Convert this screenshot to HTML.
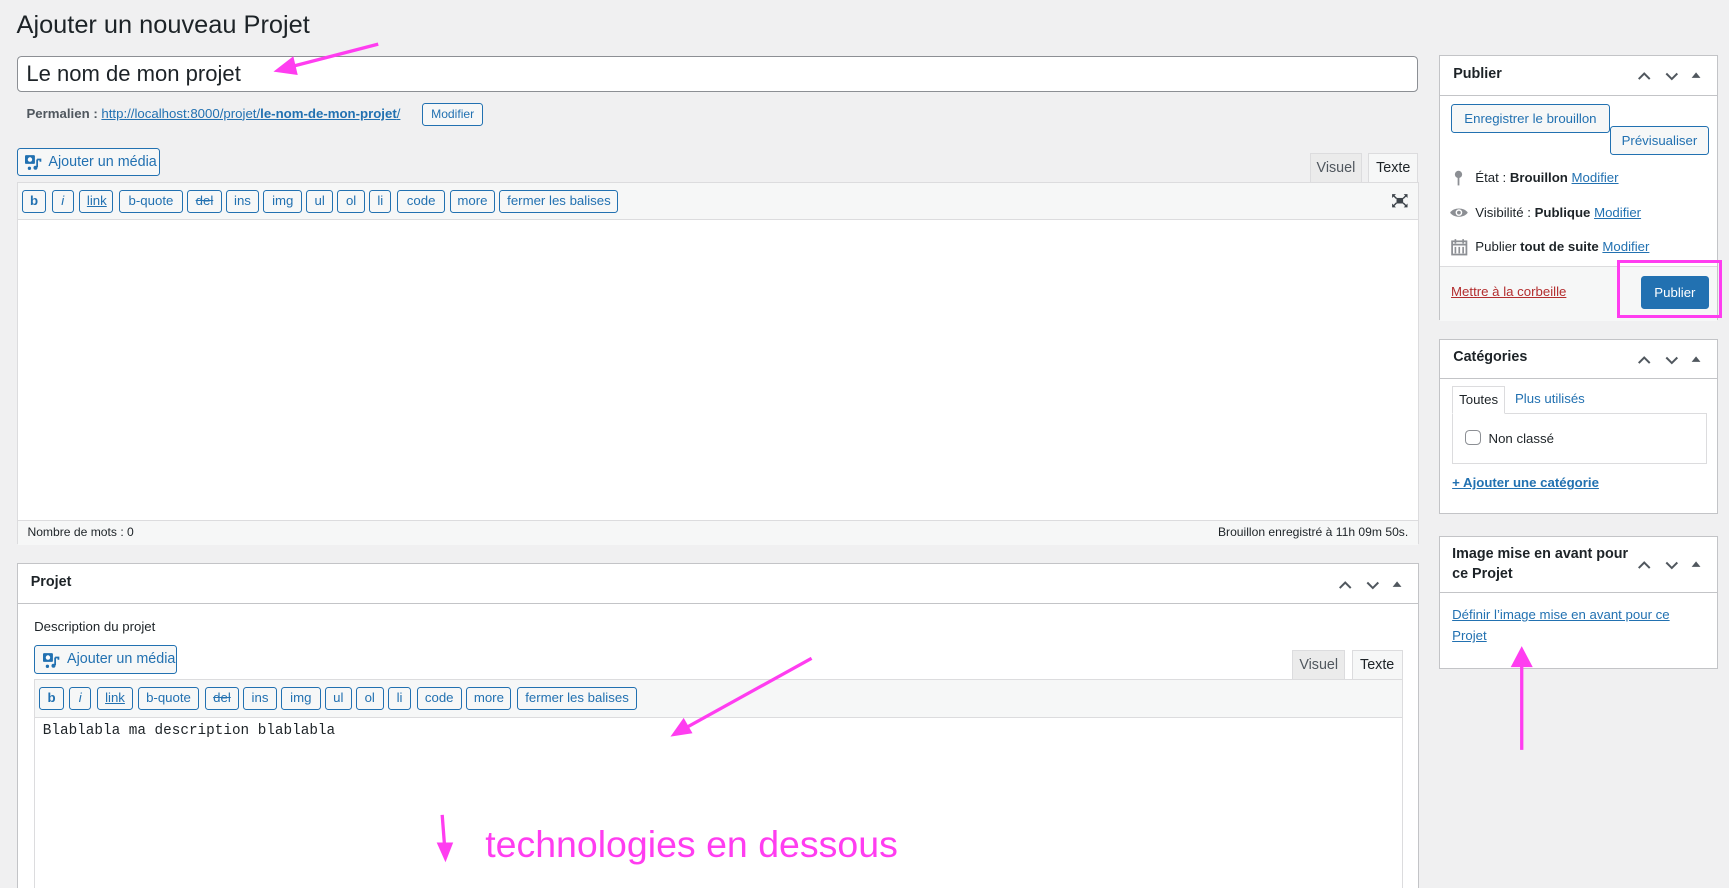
<!DOCTYPE html>
<html><head><meta charset="utf-8">
<style>
html,body{margin:0;padding:0;background:#f0f0f1;overflow:hidden;width:1729px;height:888px}
#w{zoom:1.1027;position:relative;width:1568px;height:806px;font-family:"Liberation Sans",sans-serif;color:#1d2327;font-size:13px}
.a{position:absolute}
.btn{position:absolute;border:1px solid #2271b1;border-radius:3px;background:#f6f7f7;color:#2271b1;font-size:13px;box-sizing:border-box;text-align:center;white-space:nowrap}
.box{position:absolute;background:#fff;border:1px solid #c3c4c7;box-sizing:border-box}
.hd{position:absolute;left:0;right:0;top:0;border-bottom:1px solid #c3c4c7;box-sizing:border-box}
.hd b{position:absolute;left:12px;font-size:14px}
.tb{position:absolute;height:21px;top:6px;border:1px solid #2271b1;border-radius:3px;background:#f6f7f7;color:#2271b1;font-size:12px;line-height:19px;box-sizing:border-box;text-align:center;padding:0 6px}
.tab{position:absolute;border:1px solid #dcdcde;border-bottom:none;box-sizing:border-box;font-size:13px;color:#50575e;text-align:center;line-height:26px;height:26px}
a,.lk{color:#2271b1;text-decoration:underline}
.ctl{position:absolute;right:8px;width:70px;height:14px}
</style></head><body><div id="w">
<div class="a" style="left:15px;top:10px;font-size:23px">Ajouter un nouveau Projet</div>
<div class="a" style="left:15px;top:51px;width:1271px;height:32px;border:1px solid #8c8f94;border-radius:4px;background:#fff;box-sizing:border-box;font-size:20px;line-height:30px;padding-left:8px">Le nom de mon projet</div>
<div class="a" style="left:24px;top:96px;font-size:12px;color:#50575e"><b>Permalien :</b> <span class="lk">http://localhost:8000/projet/<b>le-nom-de-mon-projet</b>/</span></div>
<div class="btn" style="left:383px;top:93px;width:55px;height:21px;font-size:11px;line-height:19px">Modifier</div>

<div class="btn" style="left:15px;top:134px;width:130px;height:26px;line-height:24px;text-align:left;padding-left:28px">Ajouter un média</div>
<svg class="a" style="left:23px;top:140px" width="16" height="15" viewBox="0 0 16 15"><rect x="0" y="1" width="9" height="8" rx="1" fill="#2271b1"/><circle cx="4.5" cy="5" r="2" fill="#fff"/><path d="M11 5v7M11 5h3v2" stroke="#2271b1" stroke-width="1.6" fill="none"/><circle cx="9.5" cy="12.5" r="1.8" fill="#2271b1"/><circle cx="4" cy="13" r="1.5" fill="#2271b1"/></svg>
<div class="tab" style="left:1188px;top:139px;width:47px;background:#ebebeb">Visuel</div>
<div class="tab" style="left:1241px;top:139px;width:45px;background:#f6f7f7;height:27px;color:#1d2327">Texte</div>
<div class="box" style="left:15px;top:165px;width:1272px;height:328px;border-color:#dcdcde">
 <div class="a" style="left:0;right:0;top:0;height:33px;background:#f6f7f7;border-bottom:1px solid #dcdcde"></div>
 <div class="tb" style="left:4px;width:22px;font-weight:bold">b</div>
 <div class="tb" style="left:31px;width:20px;font-style:italic">i</div>
 <div class="tb" style="left:56px;width:31px;text-decoration:underline">link</div>
 <div class="tb" style="left:92px;width:58px">b-quote</div>
 <div class="tb" style="left:154px;width:31px;text-decoration:line-through">del</div>
 <div class="tb" style="left:189px;width:30px">ins</div>
 <div class="tb" style="left:223px;width:35px">img</div>
 <div class="tb" style="left:262px;width:24px">ul</div>
 <div class="tb" style="left:290px;width:25px">ol</div>
 <div class="tb" style="left:319px;width:20px">li</div>
 <div class="tb" style="left:344px;width:44px">code</div>
 <div class="tb" style="left:392px;width:41px">more</div>
 <div class="tb" style="left:437px;width:108px">fermer les balises</div>
 <svg class="a" style="left:1246px;top:9px" width="16" height="14" viewBox="0 0 16 14"><path d="M1 1h3.5L1 4.5zM15 1h-3.5L15 4.5zM1 13h3.5L1 9.5zM15 13h-3.5L15 9.5z" fill="#3c434a"/><path d="M2 2l3 3M14 2l-3 3M2 12l3-3M14 12l-3-3" stroke="#3c434a" stroke-width="1.3"/><rect x="5" y="4.5" width="6" height="5" fill="#3c434a"/></svg>
 <div class="a" style="left:0;right:0;top:306px;height:21px;background:#f6f7f7;border-top:1px solid #dcdcde;font-size:11px;line-height:20px;color:#1d2327"><span style="margin-left:9px">Nombre de mots : 0</span><span style="position:absolute;right:9px">Brouillon enregistré à 11h 09m 50s.</span></div>
</div>

<div class="box" style="left:15px;top:511px;width:1272px;height:300px">
 <div class="hd" style="height:36px"><b style="top:9px;font-size:13px">Projet</b></div>
 <svg class="ctl" style="top:11px" viewBox="0 0 70 14"><path d="M7 10l5-5 5 5M32 5l5 5 5-5" stroke="#50575e" stroke-width="1.8" fill="none"/><path d="M55 9l4-5 4 5z" fill="#50575e"/></svg>
 <div class="a" style="left:15px;top:49px;font-size:12px">Description du projet</div>
 <div class="btn" style="left:15px;top:73px;width:130px;height:26px;line-height:24px;text-align:left;padding-left:29px">Ajouter un média</div>
 <svg class="a" style="left:23px;top:79px" width="16" height="15" viewBox="0 0 16 15"><rect x="0" y="1" width="9" height="8" rx="1" fill="#2271b1"/><circle cx="4.5" cy="5" r="2" fill="#fff"/><path d="M11 5v7M11 5h3v2" stroke="#2271b1" stroke-width="1.6" fill="none"/><circle cx="9.5" cy="12.5" r="1.8" fill="#2271b1"/><circle cx="4" cy="13" r="1.5" fill="#2271b1"/></svg>
 <div class="tab" style="left:1156px;top:78px;width:48px;background:#ebebeb">Visuel</div>
 <div class="tab" style="left:1210px;top:78px;width:46px;background:#f6f7f7;height:27px;color:#1d2327">Texte</div>
 <div class="a" style="left:15px;top:104px;width:1241px;height:200px;border:1px solid #dcdcde;box-sizing:border-box;background:#fff">
  <div class="a" style="left:0;right:0;top:0;height:33px;background:#f6f7f7;border-bottom:1px solid #dcdcde"></div>
  <div class="tb" style="left:4px;width:22px;font-weight:bold">b</div>
  <div class="tb" style="left:31px;width:20px;font-style:italic">i</div>
  <div class="tb" style="left:56px;width:33px;text-decoration:underline">link</div>
  <div class="tb" style="left:93px;width:56px">b-quote</div>
  <div class="tb" style="left:154px;width:31px;text-decoration:line-through">del</div>
  <div class="tb" style="left:189px;width:30px">ins</div>
  <div class="tb" style="left:223px;width:36px">img</div>
  <div class="tb" style="left:263px;width:24px">ul</div>
  <div class="tb" style="left:291px;width:25px">ol</div>
  <div class="tb" style="left:320px;width:21px">li</div>
  <div class="tb" style="left:346px;width:41px">code</div>
  <div class="tb" style="left:391px;width:41px">more</div>
  <div class="tb" style="left:437px;width:109px">fermer les balises</div>
  <div class="a" style="left:7px;top:39px;font-family:'Liberation Mono',monospace;font-size:13px">Blablabla ma description blablabla</div>
 </div>
</div>

<!-- sidebar -->
<div class="box" style="left:1305px;top:50px;width:253px;height:240px">
 <div class="hd" style="height:36px"><b style="top:9px;font-size:13px">Publier</b></div>
 <svg class="ctl" style="top:11px" viewBox="0 0 70 14"><path d="M7 10l5-5 5 5M32 5l5 5 5-5" stroke="#50575e" stroke-width="1.8" fill="none"/><path d="M55 9l4-5 4 5z" fill="#50575e"/></svg>
 <div class="btn" style="left:10px;top:43px;width:144px;height:27px;line-height:25px;font-size:12px">Enregistrer le brouillon</div>
 <div class="btn" style="left:154px;top:63px;width:90px;height:27px;line-height:25px;font-size:12px">Prévisualiser</div>
 <svg class="a" style="left:12px;top:103px" width="10" height="15" viewBox="0 0 10 15"><circle cx="5" cy="4" r="3.3" fill="#8c8f94"/><rect x="4.2" y="6" width="1.6" height="8" fill="#8c8f94"/></svg>
 <div class="a" style="left:32px;top:103px;font-size:12px">État : <b>Brouillon</b> <span class="lk">Modifier</span></div>
 <svg class="a" style="left:8px;top:136px" width="18" height="12" viewBox="0 0 18 12"><path d="M1 6c3-5 13-5 16 0c-3 5-13 5-16 0z" fill="#8c8f94"/><circle cx="9" cy="6" r="3" fill="#fff"/><circle cx="9" cy="6" r="1.7" fill="#8c8f94"/></svg>
 <div class="a" style="left:32px;top:135px;font-size:12px">Visibilité : <b>Publique</b> <span class="lk">Modifier</span></div>
 <svg class="a" style="left:10px;top:165px" width="15" height="16" viewBox="0 0 15 16"><rect x="1" y="3" width="13" height="12" fill="none" stroke="#8c8f94" stroke-width="1.6"/><path d="M4 1v4M11 1v4M1 6h13M4 8v6M7.5 8v6M11 8v6" stroke="#8c8f94" stroke-width="1.5"/></svg>
 <div class="a" style="left:32px;top:166px;font-size:12px">Publier <b>tout de suite</b> <span class="lk">Modifier</span></div>
 <div class="a" style="left:0;right:0;top:190px;height:49px;background:#f6f7f7;border-top:1px solid #dcdcde"></div>
 <div class="a" style="left:10px;top:207px;font-size:12px;color:#b32d2e;text-decoration:underline">Mettre à la corbeille</div>
 <div class="a" style="left:182px;top:199px;width:62px;height:30px;background:#2271b1;border-radius:3px;color:#fff;font-size:12px;text-align:center;line-height:30px">Publier</div>
</div>
<div class="a" style="left:1466px;top:236px;width:96px;height:52px;border:3px solid #ff3df0;box-sizing:border-box"></div>

<div class="box" style="left:1305px;top:307px;width:253px;height:159px">
 <div class="hd" style="height:36px"><b style="top:9px;font-size:13px">Catégories</b></div>
 <svg class="ctl" style="top:11px" viewBox="0 0 70 14"><path d="M7 10l5-5 5 5M32 5l5 5 5-5" stroke="#50575e" stroke-width="1.8" fill="none"/><path d="M55 9l4-5 4 5z" fill="#50575e"/></svg>
 <div class="a" style="left:11px;top:42px;width:48px;height:26px;border:1px solid #dcdcde;border-bottom:1px solid #fff;box-sizing:border-box;font-size:12px;line-height:24px;text-align:center;z-index:2;background:#fff">Toutes</div>
 <div class="a" style="left:68px;top:47px;font-size:12px;color:#2271b1">Plus utilisés</div>
 <div class="a" style="left:11px;top:67px;width:231px;height:46px;border:1px solid #dcdcde;box-sizing:border-box"></div>
 <div class="a" style="left:23px;top:82px;width:14px;height:14px;border:1px solid #8c8f94;border-radius:4px;box-sizing:border-box"></div>
 <div class="a" style="left:44px;top:83px;font-size:12px">Non classé</div>
 <div class="a" style="left:11px;top:123px;font-size:12px;font-weight:bold;color:#2271b1;text-decoration:underline">+ Ajouter une catégorie</div>
</div>

<div class="box" style="left:1305px;top:486px;width:253px;height:121px">
 <div class="hd" style="height:51px"></div>
 <div class="a" style="left:11px;top:6px;font-size:13px;font-weight:bold;line-height:19px">Image mise en avant pour<br>ce Projet</div>
 <svg class="ctl" style="top:18px" viewBox="0 0 70 14"><path d="M7 10l5-5 5 5M32 5l5 5 5-5" stroke="#50575e" stroke-width="1.8" fill="none"/><path d="M55 9l4-5 4 5z" fill="#50575e"/></svg>
 <div class="a" style="left:11px;top:62px;font-size:12px;line-height:19px;color:#2271b1;text-decoration:underline;width:220px">Définir l’image mise en avant pour ce Projet</div>
</div>

<!-- annotations -->
<svg class="a" style="left:0;top:0" width="1568" height="806">
 <g stroke="#ff3df0" stroke-width="3" fill="#ff3df0">
  <line x1="343" y1="40" x2="262" y2="61"/><path d="M248 65l18-14 4 17z" stroke="none"/>
  <line x1="736" y1="597" x2="622" y2="660"/><path d="M608 668l12-17 8 14z" stroke="none"/>
  <line x1="1380" y1="680" x2="1380" y2="600"/><path d="M1380 586l-10 19h20z" stroke="none"/>
  <line x1="401" y1="739" x2="403" y2="765"/><path d="M404 782l-8-18h15z" stroke="none"/>
 </g>
 <text x="440" y="777" font-family="Liberation Sans, sans-serif" font-size="34" fill="#ff3df0">technologies en dessous</text>
</svg>
</div></body></html>
